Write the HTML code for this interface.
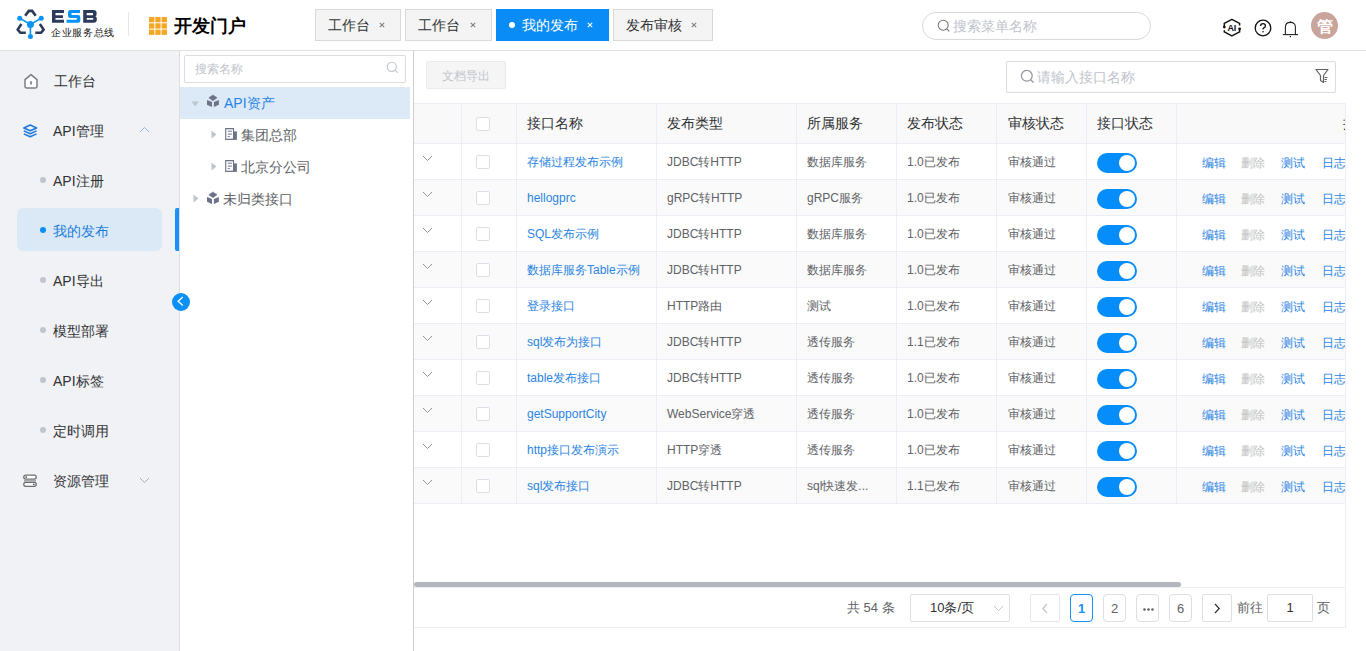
<!DOCTYPE html>
<html><head><meta charset="utf-8">
<style>
*{box-sizing:border-box;margin:0;padding:0}
html,body{width:1366px;height:651px;overflow:hidden;background:#fff;font-family:"Liberation Sans",sans-serif;color:#303133}
.abs{position:absolute}
#header{position:absolute;left:0;top:0;width:1366px;height:51px;background:#fff;border-bottom:1px solid #e0e0e0}
.tab{position:absolute;top:9px;height:32px;background:#f4f4f4;border:1px solid #d9d9d9;font-size:14px;line-height:30px;color:#303133;white-space:nowrap}
.tab .t{position:absolute;top:0}
.tab .x{position:absolute;top:0;font-size:11px;color:#909399}
.tab.act{background:#0a8cf7;border-color:#0a8cf7;color:#fff}
.tab.act .x{color:#fff}
#side{position:absolute;left:0;top:51px;width:180px;height:600px;background:#f0f2f5;border-right:1px solid #dedede}
.mi{position:absolute;left:0;width:179px;height:20px;font-size:14px;line-height:20px;color:#303133}
.mi .t{position:absolute;left:53px;top:0}
.mi .dot{position:absolute;left:40px;top:6px;width:6px;height:6px;border-radius:50%;background:#c0c4cc}
#tree{position:absolute;left:180px;top:51px;width:234px;height:600px;background:#fff;border-right:1px solid #cdcdcd}
.tr{position:absolute;left:0;width:230px;height:32px;font-size:14px;line-height:32px;color:#606266}
#main{position:absolute;left:414px;top:51px;width:952px;height:600px;background:#fff}

.th{font-size:14px;line-height:20px;color:#303133;white-space:nowrap}
.td{font-size:12px;line-height:18px;color:#606266;white-space:nowrap}
.lnk{color:#2b85e4}
.op{color:#2b85e4}
.dis{color:#c0c0c0}
.cb{width:14px;height:14px;border:1px solid #dcdfe6;border-radius:2px;background:#fff}
.sw{width:40px;height:20px;border-radius:10px;background:#058dfc}
.sw span{position:absolute;right:2px;top:2px;width:16px;height:16px;border-radius:50%;background:#fff}
.pg{font-size:13px;line-height:20px;white-space:nowrap}
.pgb{top:543px;padding-top:1px;width:23px;height:28px;border:1px solid #dcdfe6;border-radius:4px;font-size:13px;line-height:26px;text-align:center;color:#606266}
</style></head><body>
<div id="header">
  <!-- logo -->
  <svg class="abs" style="left:12px;top:5px" width="40" height="40" viewBox="0 0 40 40">
    <g fill="none" stroke="#2c3b5b" stroke-width="2.6" stroke-linejoin="miter">
      <path d="M13.2 10.8 L16.8 5.9 L20.1 5.9 L23.7 10.8"/>
      <path d="M9.4 19 L5.7 24.6 L8.4 27.8 L13.8 27.8"/>
      <path d="M27.9 19 L31.6 24.6 L29 27.8 L23.3 27.8"/>
    </g>
    <g fill="#0a93f5" stroke="#0a93f5">
      <path d="M18.4 19.4 L7.7 13.2 M18.4 19.4 L29.2 13.2 M18.4 19.4 L18.4 31.6" stroke-width="1.6" fill="none"/>
      <circle cx="18.4" cy="19.4" r="3.5" stroke="none"/>
      <circle cx="7.7" cy="13.2" r="2.5" stroke="none"/>
      <circle cx="29.2" cy="13.2" r="2.5" stroke="none"/>
      <circle cx="18.4" cy="31.6" r="2.5" stroke="none"/>
    </g>
  </svg>
  <svg class="abs" style="left:50px;top:8px" width="50" height="17" viewBox="0 0 50 17">
    <path fill="#2c3b5b" d="M2 2 H14 V5 H5.5 V7.2 H13 V10 H5.5 V11.8 H14 V14.8 H2 Z"/>
    <path fill="#0a93f5" d="M18 2 H30 V5 H21.5 V7 H28 Q30.3 7 30.3 9.3 V12.5 Q30.3 14.8 28 14.8 H16.5 V11.8 H26.8 V10 H20.3 Q18 10 18 7.7 V4.3 Q18 2 20.3 2 Z"/>
    <path fill="#2c3b5b" fill-rule="evenodd" d="M33.2 2 H43.5 Q46.6 2 46.6 5 V6.5 Q46.6 8 45.3 8.3 Q46.8 8.8 46.8 10.5 V11.8 Q46.8 14.8 43.7 14.8 H33.2 Z M36.7 5 V7.2 H43 V5 Z M36.7 10 V11.8 H43.2 V10 Z"/>
  </svg>
  <div class="abs" style="left:51px;top:26px;font-size:10.2px;letter-spacing:0.7px;line-height:13px;color:#111;white-space:nowrap">企业服务总线</div>
  <div class="abs" style="left:128px;top:12px;width:1px;height:24px;background:#e4e7ed"></div>
  <!-- grid icon -->
  <svg class="abs" style="left:149px;top:17px" width="19" height="19" viewBox="0 0 19 19">
    <g fill="#f5a623">
      <rect x="0" y="0" width="5.3" height="5.3"/><rect x="6.3" y="0" width="5.3" height="5.3"/><rect x="12.6" y="0" width="5.3" height="5.3"/>
      <rect x="0" y="6.3" width="5.3" height="5.3"/><rect x="6.3" y="6.3" width="5.3" height="5.3"/><rect x="12.6" y="6.3" width="5.3" height="5.3"/>
      <rect x="0" y="12.6" width="5.3" height="5.3"/><rect x="6.3" y="12.6" width="5.3" height="5.3"/><rect x="12.6" y="12.6" width="5.3" height="5.3"/>
    </g>
  </svg>
  <div class="abs" style="left:174px;top:14px;font-size:18px;line-height:24px;font-weight:bold;color:#000;white-space:nowrap">开发门户</div>

  <!-- tabs -->
  <div class="tab" style="left:315px;width:86px"><span class="t" style="left:12px">工作台</span><svg class="abs" style="left:63px;top:12px" width="6" height="6" viewBox="0 0 6 6"><path d="M0.8 0.8 L5.2 5.2 M5.2 0.8 L0.8 5.2" stroke="#808080" stroke-width="1.1"/></svg></div>
  <div class="tab" style="left:405px;width:87px"><span class="t" style="left:12px">工作台</span><svg class="abs" style="left:64px;top:12px" width="6" height="6" viewBox="0 0 6 6"><path d="M0.8 0.8 L5.2 5.2 M5.2 0.8 L0.8 5.2" stroke="#808080" stroke-width="1.1"/></svg></div>
  <div class="tab act" style="left:496px;width:113px"><span class="abs" style="left:12px;top:12px;width:6px;height:6px;border-radius:50%;background:#fff"></span><span class="t" style="left:25px">我的发布</span><svg class="abs" style="left:90px;top:12px" width="6" height="6" viewBox="0 0 6 6"><path d="M0.8 0.8 L5.2 5.2 M5.2 0.8 L0.8 5.2" stroke="#fff" stroke-width="1.1"/></svg></div>
  <div class="tab" style="left:613px;width:100px"><span class="t" style="left:12px">发布审核</span><svg class="abs" style="left:77px;top:12px" width="6" height="6" viewBox="0 0 6 6"><path d="M0.8 0.8 L5.2 5.2 M5.2 0.8 L0.8 5.2" stroke="#808080" stroke-width="1.1"/></svg></div>

  <!-- search -->
  <div class="abs" style="left:922px;top:12px;width:229px;height:28px;border:1px solid #d9d9d9;border-radius:14px"></div>
  <svg class="abs" style="left:937px;top:19px" width="14" height="14" viewBox="0 0 14 14"><circle cx="6.2" cy="6.2" r="5" fill="none" stroke="#7a7a7a" stroke-width="1.1"/><path d="M9.8 9.8 L12.3 12.3" stroke="#7a7a7a" stroke-width="1.2"/></svg>
  <div class="abs" style="left:953px;top:16px;font-size:14px;line-height:20px;color:#c0c4cc;white-space:nowrap">搜索菜单名称</div>

  <!-- right icons -->
  <svg class="abs" style="left:1220px;top:15px" width="25" height="25" viewBox="0 0 25 25">
    <path d="M4.3 11.6 V8.3 L11.9 4.4 L19.6 8.3 V10.6 M19.6 14 V16.9 L11.9 20.9 L4.3 16.9 V15.2" fill="none" stroke="#111" stroke-width="1.5" stroke-linejoin="round"/>
    <circle cx="4.3" cy="12.1" r="1.4" fill="#111"/><circle cx="19.6" cy="13.8" r="1.4" fill="#111"/>
    <text x="11.8" y="15.8" text-anchor="middle" font-family="Liberation Sans" font-weight="bold" font-size="9" fill="#111" letter-spacing="-0.3">AI</text>
  </svg>
  <svg class="abs" style="left:1254px;top:19px" width="18" height="18" viewBox="0 0 18 18">
    <circle cx="9" cy="9" r="7.8" fill="none" stroke="#111" stroke-width="1.3"/>
    <path d="M6.6 7 Q6.6 4.6 9 4.6 Q11.4 4.6 11.4 6.8 Q11.4 8.3 9.9 8.9 Q9 9.3 9 10.6" fill="none" stroke="#111" stroke-width="1.3"/>
    <circle cx="9" cy="12.8" r="0.8" fill="#111"/>
  </svg>
  <svg class="abs" style="left:1282px;top:20px" width="17" height="18" viewBox="0 0 17 18">
    <path d="M3.4 14.5 V7.3 Q3.4 2.4 8.4 2.4 Q13.4 2.4 13.4 7.3 V14.5" fill="none" stroke="#222" stroke-width="1.1"/>
    <path d="M0.8 14.6 H16" stroke="#222" stroke-width="1.1"/>
    <circle cx="8.4" cy="2.1" r="0.8" fill="#222"/>
    <circle cx="8.3" cy="16.5" r="0.75" fill="#222"/>
  </svg>
  <div class="abs" style="left:1311px;top:12px;width:27px;height:27px;border-radius:50%;background:#c9a49b;color:#fff;font-size:16px;line-height:29px;text-align:center;font-weight:bold">管</div>
</div>

<div id="side">
  <!-- home icon -->
  <svg class="abs" style="left:23px;top:22px" width="16" height="16" viewBox="0 0 16 16">
    <path d="M2 6.6 L8 1.6 L14 6.6 V13.6 Q14 15 12.6 15 H3.4 Q2 15 2 13.6 Z" fill="#fff" stroke="#7b7d85" stroke-width="1.5" stroke-linejoin="round"/>
    <path d="M8 8.3 V11.6" stroke="#7b7d85" stroke-width="1.7"/>
  </svg>
<div class="mi" style="top:20px"><span class="t" style="left:54px">工作台</span></div>
  <!-- layers icon -->
  <svg class="abs" style="left:22px;top:73px" width="16" height="15" viewBox="0 0 16 15">
    <path d="M8.2 1.1 L14.6 3.9 L8.2 6.7 L1.8 3.9 Z" fill="none" stroke="#1f78e0" stroke-width="1.6" stroke-linejoin="round"/>
    <path d="M1.8 6.9 L8.2 9.7 L14.6 6.9" fill="none" stroke="#1f78e0" stroke-width="1.5" stroke-linejoin="round"/>
    <path d="M1.8 9.9 L8.2 12.8 L14.6 9.9" fill="none" stroke="#1f78e0" stroke-width="1.5" stroke-linejoin="round"/>
  </svg>
<div class="mi" style="top:70px"><span class="t">API管理</span></div>
  <svg class="abs" style="left:139px;top:75px" width="11" height="7" viewBox="0 0 11 7"><path d="M1 6 L5.5 1.5 L10 6" fill="none" stroke="#8cb4e6" stroke-width="1"/></svg>
  <div class="mi" style="top:120px"><span class="dot"></span><span class="t">API注册</span></div>
  <div class="abs" style="left:17px;top:157px;width:145px;height:43px;border-radius:6px;background:#dbe9f6"></div>
  <div class="abs" style="left:175px;top:157px;width:4px;height:43px;border-radius:2px 0 0 2px;background:#1890ff"></div>
  <div class="mi" style="top:170px;color:#1d7edd"><span class="dot" style="background:#0a8ff5"></span><span class="t">我的发布</span></div>
  <div class="mi" style="top:220px"><span class="dot"></span><span class="t">API导出</span></div>
  <div class="mi" style="top:270px"><span class="dot"></span><span class="t">模型部署</span></div>
  <div class="mi" style="top:320px"><span class="dot"></span><span class="t">API标签</span></div>
  <div class="mi" style="top:370px"><span class="dot"></span><span class="t">定时调用</span></div>
  <!-- server icon -->
  <svg class="abs" style="left:22px;top:422px" width="16" height="16" viewBox="0 0 16 16">
    <rect x="1.75" y="2.05" width="12.5" height="4.1" rx="2.05" fill="#fff" stroke="#6e6e72" stroke-width="1.3"/>
    <rect x="1.75" y="9.4" width="12.5" height="3.9" rx="1.95" fill="#fff" stroke="#6e6e72" stroke-width="1.3"/>
    <path d="M2 6.8 H14 V8.8 H2 Z" fill="#a9a9ac"/>
    <circle cx="4.2" cy="4.1" r="0.9" fill="#555"/>
    <circle cx="11.8" cy="11.35" r="0.9" fill="#555"/>
  </svg>
<div class="mi" style="top:420px"><span class="t">资源管理</span></div>
  <svg class="abs" style="left:139px;top:426px" width="11" height="7" viewBox="0 0 11 7"><path d="M1 1 L5.5 5.5 L10 1" fill="none" stroke="#a8abb2" stroke-width="1"/></svg>
</div>
<div id="tree">
  <div class="abs" style="left:4px;top:4px;width:222px;height:28px;border:1px solid #dcdcdc;border-radius:2px"></div>
  <div class="abs" style="left:15px;top:10px;font-size:12px;line-height:16px;color:#c0c4cc">搜索名称</div>
  <svg class="abs" style="left:206px;top:10px" width="13" height="13" viewBox="0 0 13 13"><circle cx="5.8" cy="5.8" r="4.6" fill="none" stroke="#c0c4cc" stroke-width="1.1"/><path d="M9.2 9.2 L11.8 11.8" stroke="#c0c4cc" stroke-width="1.1"/></svg>
  <div class="abs" style="left:0;top:36px;width:230px;height:32px;background:#dce9f6"></div>
  <svg class="abs" style="left:11px;top:50px" width="9" height="6" viewBox="0 0 9 6"><path d="M0.5 0.5 H8 L4.25 5.2 Z" fill="#c0c4cc"/></svg>
  <svg class="abs cube" style="left:26px;top:43px" width="14" height="14" viewBox="0 0 14 14"><path d="M6.95 0.9 L11.1 3.8 L6.95 6.7 L2.8 3.8 Z" fill="#6c7289" stroke="#6c7289" stroke-width="0.5" stroke-linejoin="round"/><path d="M1 6 L6 8 V12.9 L1 10.8 Z" fill="#6c7289"/><path d="M12.9 6 L7.9 8 V12.9 L12.9 10.8 Z" fill="#6c7289"/></svg>
  <div class="tr" style="top:36px;left:44px;color:#2684e6">API资产</div>
  <svg class="abs" style="left:31px;top:79px" width="6" height="9" viewBox="0 0 6 9"><path d="M0.5 0.5 V8.5 L5.5 4.5 Z" fill="#c0c4cc"/></svg>
  <svg class="abs" style="left:44px;top:76px" width="14" height="14" viewBox="0 0 14 14"><path d="M1.7 1.6 H9.5 V12.4 H1.7 Z" fill="#fff" stroke="#6c7289" stroke-width="1.1"/><rect x="9.4" y="4.4" width="3.5" height="8.5" fill="#6c7289"/><path d="M3.8 4.2 H7.9 M3.8 7.1 H7.9 M3.8 9.6 H5.8" stroke="#6c7289" stroke-width="1"/></svg>
  <div class="tr" style="top:68px;left:61px">集团总部</div>
  <svg class="abs" style="left:31px;top:111px" width="6" height="9" viewBox="0 0 6 9"><path d="M0.5 0.5 V8.5 L5.5 4.5 Z" fill="#c0c4cc"/></svg>
  <svg class="abs" style="left:44px;top:108px" width="14" height="14" viewBox="0 0 14 14"><path d="M1.7 1.6 H9.5 V12.4 H1.7 Z" fill="#fff" stroke="#6c7289" stroke-width="1.1"/><rect x="9.4" y="4.4" width="3.5" height="8.5" fill="#6c7289"/><path d="M3.8 4.2 H7.9 M3.8 7.1 H7.9 M3.8 9.6 H5.8" stroke="#6c7289" stroke-width="1"/></svg>
  <div class="tr" style="top:100px;left:61px">北京分公司</div>
  <svg class="abs" style="left:13px;top:143px" width="6" height="9" viewBox="0 0 6 9"><path d="M0.5 0.5 V8.5 L5.5 4.5 Z" fill="#c0c4cc"/></svg>
  <svg class="abs cube" style="left:26px;top:140px" width="14" height="14" viewBox="0 0 14 14"><path d="M6.95 0.9 L11.1 3.8 L6.95 6.7 L2.8 3.8 Z" fill="#6c7289" stroke="#6c7289" stroke-width="0.5" stroke-linejoin="round"/><path d="M1 6 L6 8 V12.9 L1 10.8 Z" fill="#6c7289"/><path d="M12.9 6 L7.9 8 V12.9 L12.9 10.8 Z" fill="#6c7289"/></svg>
  <div class="tr" style="top:132px;left:43px">未归类接口</div>
</div>
<div id="main">
<div class="abs" style="left:12px;top:10px;width:80px;height:28px;background:#f5f5f5;border:1px solid #ebebeb;border-radius:2px;font-size:12px;line-height:28px;color:#c0c4cc;text-align:center">文档导出</div>
<div class="abs" style="left:592px;top:10px;width:330px;height:32px;border:1px solid #dcdcdc;border-radius:2px"></div>
<svg class="abs" style="left:606px;top:18px" width="15" height="15" viewBox="0 0 15 15"><circle cx="6.8" cy="6.8" r="5.4" fill="none" stroke="#909399" stroke-width="1.2"/><path d="M10.7 10.7 L13.6 13.6" stroke="#909399" stroke-width="1.3"/></svg>
<div class="abs" style="left:623px;top:16px;font-size:14px;line-height:20px;color:#c0c4cc;white-space:nowrap">请输入接口名称</div>
<svg class="abs" style="left:901px;top:17px" width="14" height="16" viewBox="0 0 14 16"><path d="M1 1.5 H13 L8.5 7.5 V14.5 L5.5 12.5 V7.5 Z" fill="none" stroke="#606266" stroke-width="1.2" stroke-linejoin="round"/><path d="M9.5 9.5 H12.5 M9.5 11.5 H12 M9.5 13.5 H11.5" stroke="#606266" stroke-width="1"/></svg>
<div class="abs" style="left:0;top:52px;width:932px;height:525px;overflow:hidden;border-right:1px solid #ebeef5;border-top:1px solid #ebeef5;border-bottom:1px solid #ebeef5">
<div class="abs" style="left:0;top:0;width:1000px;height:40px;background:#f9f9fa;border-bottom:1px solid #ebeef5"></div>
<div class="abs" style="left:0;top:40px;width:1000px;height:36px;background:#fff;border-bottom:1px solid #ebeef5"></div>
<div class="abs" style="left:0;top:76px;width:1000px;height:36px;background:#fafafa;border-bottom:1px solid #ebeef5"></div>
<div class="abs" style="left:0;top:112px;width:1000px;height:36px;background:#fff;border-bottom:1px solid #ebeef5"></div>
<div class="abs" style="left:0;top:148px;width:1000px;height:36px;background:#fafafa;border-bottom:1px solid #ebeef5"></div>
<div class="abs" style="left:0;top:184px;width:1000px;height:36px;background:#fff;border-bottom:1px solid #ebeef5"></div>
<div class="abs" style="left:0;top:220px;width:1000px;height:36px;background:#fafafa;border-bottom:1px solid #ebeef5"></div>
<div class="abs" style="left:0;top:256px;width:1000px;height:36px;background:#fff;border-bottom:1px solid #ebeef5"></div>
<div class="abs" style="left:0;top:292px;width:1000px;height:36px;background:#fafafa;border-bottom:1px solid #ebeef5"></div>
<div class="abs" style="left:0;top:328px;width:1000px;height:36px;background:#fff;border-bottom:1px solid #ebeef5"></div>
<div class="abs" style="left:0;top:364px;width:1000px;height:36px;background:#fafafa;border-bottom:1px solid #ebeef5"></div>
<div class="abs" style="left:47px;top:0;width:1px;height:399px;background:#ebeef5"></div>
<div class="abs" style="left:102px;top:0;width:1px;height:399px;background:#ebeef5"></div>
<div class="abs" style="left:242px;top:0;width:1px;height:399px;background:#ebeef5"></div>
<div class="abs" style="left:382px;top:0;width:1px;height:399px;background:#ebeef5"></div>
<div class="abs" style="left:482px;top:0;width:1px;height:399px;background:#ebeef5"></div>
<div class="abs" style="left:582px;top:0;width:1px;height:399px;background:#ebeef5"></div>
<div class="abs" style="left:672px;top:0;width:1px;height:399px;background:#ebeef5"></div>
<div class="abs" style="left:762px;top:0;width:1px;height:399px;background:#ebeef5"></div>
<div class="abs th" style="left:113px;top:9px">接口名称</div>
<div class="abs th" style="left:253px;top:9px">发布类型</div>
<div class="abs th" style="left:393px;top:9px">所属服务</div>
<div class="abs th" style="left:493px;top:9px">发布状态</div>
<div class="abs th" style="left:594px;top:9px">审核状态</div>
<div class="abs th" style="left:683px;top:9px">接口状态</div>
<div class="abs th" style="left:929px;top:9px">操作</div>
<div class="abs cb" style="left:62px;top:13px"></div>
<svg class="abs" style="left:8px;top:51px" width="11" height="7" viewBox="0 0 11 7"><path d="M1 1 L5.5 5.5 L10 1" fill="none" stroke="#909399" stroke-width="1"/></svg>
<div class="abs cb" style="left:62px;top:51px"></div>
<div class="abs td lnk" style="left:113px;top:49px">存储过程发布示例</div>
<div class="abs td" style="left:253px;top:49px">JDBC转HTTP</div>
<div class="abs td" style="left:393px;top:49px">数据库服务</div>
<div class="abs td" style="left:493px;top:49px">1.0已发布</div>
<div class="abs td" style="left:594px;top:49px">审核通过</div>
<div class="abs sw" style="left:683px;top:49px"><span></span></div>
<div class="abs td op" style="left:788px;top:50px">编辑</div>
<div class="abs td op dis" style="left:827px;top:50px">删除</div>
<div class="abs td op" style="left:867px;top:50px">测试</div>
<div class="abs td op" style="left:908px;top:50px">日志</div>
<svg class="abs" style="left:8px;top:87px" width="11" height="7" viewBox="0 0 11 7"><path d="M1 1 L5.5 5.5 L10 1" fill="none" stroke="#909399" stroke-width="1"/></svg>
<div class="abs cb" style="left:62px;top:87px"></div>
<div class="abs td lnk" style="left:113px;top:85px">hellogprc</div>
<div class="abs td" style="left:253px;top:85px">gRPC转HTTP</div>
<div class="abs td" style="left:393px;top:85px">gRPC服务</div>
<div class="abs td" style="left:493px;top:85px">1.0已发布</div>
<div class="abs td" style="left:594px;top:85px">审核通过</div>
<div class="abs sw" style="left:683px;top:85px"><span></span></div>
<div class="abs td op" style="left:788px;top:86px">编辑</div>
<div class="abs td op dis" style="left:827px;top:86px">删除</div>
<div class="abs td op" style="left:867px;top:86px">测试</div>
<div class="abs td op" style="left:908px;top:86px">日志</div>
<svg class="abs" style="left:8px;top:123px" width="11" height="7" viewBox="0 0 11 7"><path d="M1 1 L5.5 5.5 L10 1" fill="none" stroke="#909399" stroke-width="1"/></svg>
<div class="abs cb" style="left:62px;top:123px"></div>
<div class="abs td lnk" style="left:113px;top:121px">SQL发布示例</div>
<div class="abs td" style="left:253px;top:121px">JDBC转HTTP</div>
<div class="abs td" style="left:393px;top:121px">数据库服务</div>
<div class="abs td" style="left:493px;top:121px">1.0已发布</div>
<div class="abs td" style="left:594px;top:121px">审核通过</div>
<div class="abs sw" style="left:683px;top:121px"><span></span></div>
<div class="abs td op" style="left:788px;top:122px">编辑</div>
<div class="abs td op dis" style="left:827px;top:122px">删除</div>
<div class="abs td op" style="left:867px;top:122px">测试</div>
<div class="abs td op" style="left:908px;top:122px">日志</div>
<svg class="abs" style="left:8px;top:159px" width="11" height="7" viewBox="0 0 11 7"><path d="M1 1 L5.5 5.5 L10 1" fill="none" stroke="#909399" stroke-width="1"/></svg>
<div class="abs cb" style="left:62px;top:159px"></div>
<div class="abs td lnk" style="left:113px;top:157px">数据库服务Table示例</div>
<div class="abs td" style="left:253px;top:157px">JDBC转HTTP</div>
<div class="abs td" style="left:393px;top:157px">数据库服务</div>
<div class="abs td" style="left:493px;top:157px">1.0已发布</div>
<div class="abs td" style="left:594px;top:157px">审核通过</div>
<div class="abs sw" style="left:683px;top:157px"><span></span></div>
<div class="abs td op" style="left:788px;top:158px">编辑</div>
<div class="abs td op dis" style="left:827px;top:158px">删除</div>
<div class="abs td op" style="left:867px;top:158px">测试</div>
<div class="abs td op" style="left:908px;top:158px">日志</div>
<svg class="abs" style="left:8px;top:195px" width="11" height="7" viewBox="0 0 11 7"><path d="M1 1 L5.5 5.5 L10 1" fill="none" stroke="#909399" stroke-width="1"/></svg>
<div class="abs cb" style="left:62px;top:195px"></div>
<div class="abs td lnk" style="left:113px;top:193px">登录接口</div>
<div class="abs td" style="left:253px;top:193px">HTTP路由</div>
<div class="abs td" style="left:393px;top:193px">测试</div>
<div class="abs td" style="left:493px;top:193px">1.0已发布</div>
<div class="abs td" style="left:594px;top:193px">审核通过</div>
<div class="abs sw" style="left:683px;top:193px"><span></span></div>
<div class="abs td op" style="left:788px;top:194px">编辑</div>
<div class="abs td op dis" style="left:827px;top:194px">删除</div>
<div class="abs td op" style="left:867px;top:194px">测试</div>
<div class="abs td op" style="left:908px;top:194px">日志</div>
<svg class="abs" style="left:8px;top:231px" width="11" height="7" viewBox="0 0 11 7"><path d="M1 1 L5.5 5.5 L10 1" fill="none" stroke="#909399" stroke-width="1"/></svg>
<div class="abs cb" style="left:62px;top:231px"></div>
<div class="abs td lnk" style="left:113px;top:229px">sql发布为接口</div>
<div class="abs td" style="left:253px;top:229px">JDBC转HTTP</div>
<div class="abs td" style="left:393px;top:229px">透传服务</div>
<div class="abs td" style="left:493px;top:229px">1.1已发布</div>
<div class="abs td" style="left:594px;top:229px">审核通过</div>
<div class="abs sw" style="left:683px;top:229px"><span></span></div>
<div class="abs td op" style="left:788px;top:230px">编辑</div>
<div class="abs td op dis" style="left:827px;top:230px">删除</div>
<div class="abs td op" style="left:867px;top:230px">测试</div>
<div class="abs td op" style="left:908px;top:230px">日志</div>
<svg class="abs" style="left:8px;top:267px" width="11" height="7" viewBox="0 0 11 7"><path d="M1 1 L5.5 5.5 L10 1" fill="none" stroke="#909399" stroke-width="1"/></svg>
<div class="abs cb" style="left:62px;top:267px"></div>
<div class="abs td lnk" style="left:113px;top:265px">table发布接口</div>
<div class="abs td" style="left:253px;top:265px">JDBC转HTTP</div>
<div class="abs td" style="left:393px;top:265px">透传服务</div>
<div class="abs td" style="left:493px;top:265px">1.0已发布</div>
<div class="abs td" style="left:594px;top:265px">审核通过</div>
<div class="abs sw" style="left:683px;top:265px"><span></span></div>
<div class="abs td op" style="left:788px;top:266px">编辑</div>
<div class="abs td op dis" style="left:827px;top:266px">删除</div>
<div class="abs td op" style="left:867px;top:266px">测试</div>
<div class="abs td op" style="left:908px;top:266px">日志</div>
<svg class="abs" style="left:8px;top:303px" width="11" height="7" viewBox="0 0 11 7"><path d="M1 1 L5.5 5.5 L10 1" fill="none" stroke="#909399" stroke-width="1"/></svg>
<div class="abs cb" style="left:62px;top:303px"></div>
<div class="abs td lnk" style="left:113px;top:301px">getSupportCity</div>
<div class="abs td" style="left:253px;top:301px">WebService穿透</div>
<div class="abs td" style="left:393px;top:301px">透传服务</div>
<div class="abs td" style="left:493px;top:301px">1.0已发布</div>
<div class="abs td" style="left:594px;top:301px">审核通过</div>
<div class="abs sw" style="left:683px;top:301px"><span></span></div>
<div class="abs td op" style="left:788px;top:302px">编辑</div>
<div class="abs td op dis" style="left:827px;top:302px">删除</div>
<div class="abs td op" style="left:867px;top:302px">测试</div>
<div class="abs td op" style="left:908px;top:302px">日志</div>
<svg class="abs" style="left:8px;top:339px" width="11" height="7" viewBox="0 0 11 7"><path d="M1 1 L5.5 5.5 L10 1" fill="none" stroke="#909399" stroke-width="1"/></svg>
<div class="abs cb" style="left:62px;top:339px"></div>
<div class="abs td lnk" style="left:113px;top:337px">http接口发布演示</div>
<div class="abs td" style="left:253px;top:337px">HTTP穿透</div>
<div class="abs td" style="left:393px;top:337px">透传服务</div>
<div class="abs td" style="left:493px;top:337px">1.0已发布</div>
<div class="abs td" style="left:594px;top:337px">审核通过</div>
<div class="abs sw" style="left:683px;top:337px"><span></span></div>
<div class="abs td op" style="left:788px;top:338px">编辑</div>
<div class="abs td op dis" style="left:827px;top:338px">删除</div>
<div class="abs td op" style="left:867px;top:338px">测试</div>
<div class="abs td op" style="left:908px;top:338px">日志</div>
<svg class="abs" style="left:8px;top:375px" width="11" height="7" viewBox="0 0 11 7"><path d="M1 1 L5.5 5.5 L10 1" fill="none" stroke="#909399" stroke-width="1"/></svg>
<div class="abs cb" style="left:62px;top:375px"></div>
<div class="abs td lnk" style="left:113px;top:373px">sql发布接口</div>
<div class="abs td" style="left:253px;top:373px">JDBC转HTTP</div>
<div class="abs td" style="left:393px;top:373px">sql快速发...</div>
<div class="abs td" style="left:493px;top:373px">1.1已发布</div>
<div class="abs td" style="left:594px;top:373px">审核通过</div>
<div class="abs sw" style="left:683px;top:373px"><span></span></div>
<div class="abs td op" style="left:788px;top:374px">编辑</div>
<div class="abs td op dis" style="left:827px;top:374px">删除</div>
<div class="abs td op" style="left:867px;top:374px">测试</div>
<div class="abs td op" style="left:908px;top:374px">日志</div>
<div class="abs" style="left:0;top:478px;width:767px;height:5px;border-radius:3px;background:#b2b6bd"></div>
<div class="abs" style="left:0;top:483px;width:1000px;height:1px;background:#ebeef5"></div>
</div>
<div class="abs pg" style="left:433px;top:547px;color:#606266">共 54 条</div>
<div class="abs" style="left:496px;top:543px;width:100px;height:28px;border:1px solid #dcdfe6;border-radius:2px"></div>
<div class="abs pg" style="left:516px;top:547px;color:#303133">10条/页</div>
<svg class="abs" style="left:579px;top:554px" width="11" height="7" viewBox="0 0 11 7"><path d="M1 1 L5.5 5.5 L10 1" fill="none" stroke="#c0c4cc" stroke-width="1"/></svg>
<div class="abs" style="left:616px;top:543px;width:30px;height:28px;border:1px solid #e4e7ed;border-radius:2px"></div>
<svg class="abs" style="left:627px;top:552px" width="8" height="11" viewBox="0 0 8 11"><path d="M6 1 L1.8 5.5 L6 10" fill="none" stroke="#c0c4cc" stroke-width="1.2"/></svg>
<div class="abs pgb" style="left:656px;border-color:#1890ff;color:#1890ff;font-weight:bold">1</div>
<div class="abs pgb" style="left:689px">2</div>
<div class="abs pgb" style="left:722px;"><svg style="position:absolute;left:6px;top:13px" width="11" height="3" viewBox="0 0 11 3"><circle cx="1.5" cy="1.5" r="1.3" fill="#606266"/><circle cx="5.5" cy="1.5" r="1.3" fill="#606266"/><circle cx="9.5" cy="1.5" r="1.3" fill="#606266"/></svg></div>
<div class="abs pgb" style="left:755px">6</div>
<div class="abs" style="left:788px;top:543px;width:30px;height:28px;border:1px solid #dcdfe6;border-radius:2px"></div>
<svg class="abs" style="left:799px;top:552px" width="8" height="11" viewBox="0 0 8 11"><path d="M2 1 L6.2 5.5 L2 10" fill="none" stroke="#303133" stroke-width="1.2"/></svg>
<div class="abs pg" style="left:823px;top:547px;color:#606266">前往</div>
<div class="abs" style="left:853px;top:543px;width:46px;height:28px;border:1px solid #dcdfe6;border-radius:2px;text-align:center;font-size:13px;line-height:26px;color:#303133">1</div>
<div class="abs pg" style="left:903px;top:547px;color:#606266">页</div>
</div>
<div class="abs" style="left:172px;top:293px;width:18px;height:18px;border-radius:50%;background:#0b90f8;z-index:5"></div>
<svg class="abs" style="left:172px;top:293px;z-index:6" width="18" height="18" viewBox="0 0 18 18"><path d="M10.8 4 L6.1 8.3 L10.8 12.6" fill="none" stroke="#fff" stroke-width="1.3"/></svg>
</body></html>
